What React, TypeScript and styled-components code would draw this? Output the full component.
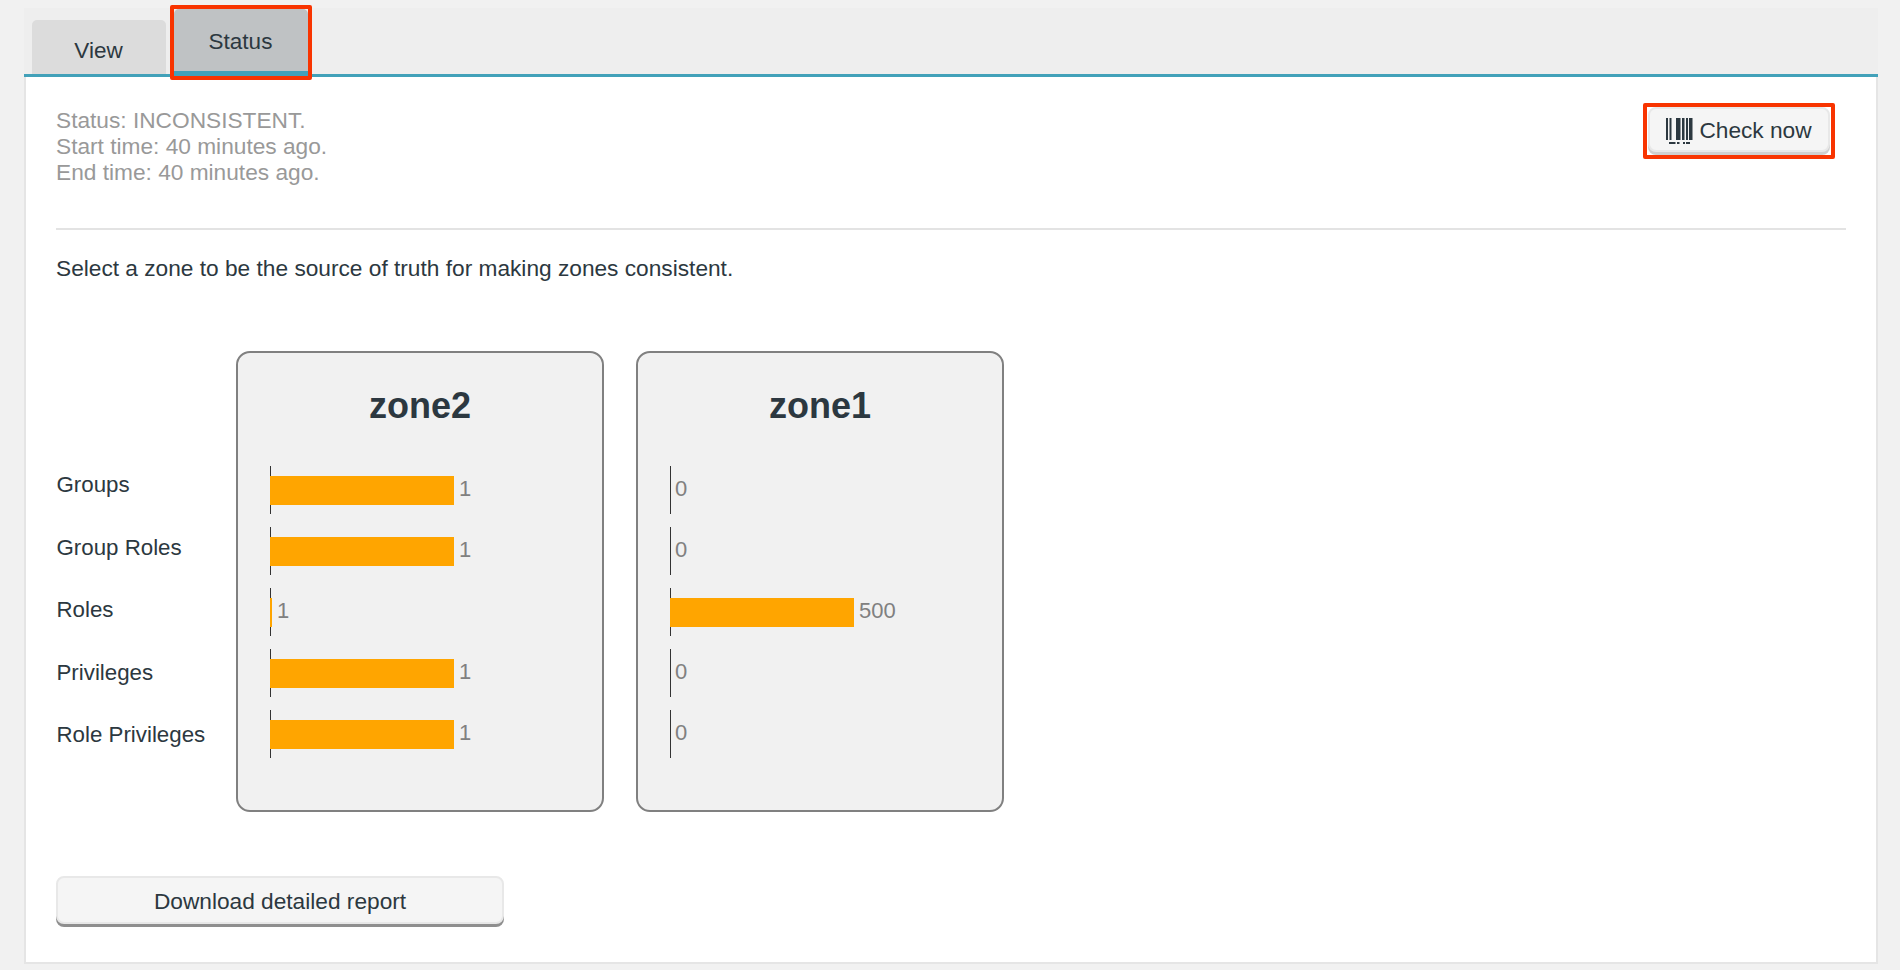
import React from "react";
import styled, { createGlobalStyle } from "styled-components";

const Global = createGlobalStyle`
  html, body { margin: 0; padding: 0; background: #f1f1f1; }
  body { font-family: "Liberation Sans", Arial, sans-serif; color: #2c3840; }
  * { box-sizing: border-box; }
`;

const Panel = styled.div`
  width: 1854px;
  margin: 8px 0 6px 24px;
`;

const TabBar = styled.div`
  height: 69px;
  display: flex;
  align-items: flex-end;
  gap: 8px;
  padding-left: 8px;
  background: #eeeeee;
  border-bottom: 3px solid #42a1b9;
`;

const Tab = styled.div<{ $active?: boolean }>`
  position: relative;
  width: 134px;
  height: ${(p) => (p.$active ? "67px" : "54px")};
  margin-bottom: ${(p) => (p.$active ? "-2px" : "0")};
  padding-top: ${(p) => (p.$active ? "20px" : "18px")};
  padding-right: 1px;
  text-align: center;
  font-size: 22.5px;
  line-height: 26px;
  border-radius: 5px 5px 0 0;
  background: ${(p) => (p.$active ? "#bfc2c4" : "#dcdcdc")};
  border-bottom: ${(p) => (p.$active ? "5px solid #42a1b9" : "none")};

  &::after {
    content: ${(p) => (p.$active ? '""' : "none")};
    position: absolute;
    inset: -4px -4px -9px;
    border: 4px solid #f83400;
    border-radius: 2px;
  }
`;

const Body = styled.div`
  height: 887px;
  padding: 31px 30px 0 30px;
  background: #ffffff;
  border: 2px solid #e5e5e5;
  border-top: none;
`;

const Head = styled.div`
  height: 122px;
  display: flex;
  justify-content: space-between;
  align-items: flex-start;
  border-bottom: 2px solid #e3e3e3;
`;

const StatusText = styled.div`
  margin-top: -1px;
  font-size: 22.7px;
  line-height: 26px;
  color: #999999;
`;

const Button = styled.button<{ $heavy?: boolean }>`
  position: relative;
  display: flex;
  align-items: center;
  justify-content: center;
  gap: 6px;
  padding: 2px 0 0;
  font-family: inherit;
  font-size: 22.7px;
  color: #2c3840;
  background: #f5f5f5;
  border: 2px solid #e8e8e8;
  border-radius: 8px;
  box-shadow: 0 3px 0 ${(p) => (p.$heavy ? "#8f8f8f" : "#cfcfcf")};
`;

const CheckButton = styled(Button)`
  width: 182px;
  height: 45px;
  margin-top: -1px;
  margin-right: 16px;

  &::after {
    content: "";
    position: absolute;
    inset: -6px -7px -9px;
    border: 4px solid #f83400;
    border-radius: 2px;
  }
`;

const Intro = styled.p`
  margin: 25px 0 0;
  font-size: 22.7px;
  line-height: 26px;
`;

const Compare = styled.div`
  display: flex;
  margin-top: 70px;
`;

const LabelColumn = styled.div`
  width: 180px;
  padding-top: 103px;
  display: grid;
  grid-auto-rows: 62.5px;
  align-content: start;
`;

const RowLabel = styled.div`
  padding-left: 0.5px;
  font-size: 22.3px;
  line-height: 62.5px;
  white-space: nowrap;
`;

const Card = styled.div`
  width: 368px;
  height: 461px;
  margin-right: 32px;
  padding: 0 0 0 32px;
  background: #f1f1f1;
  border: 2px solid #808080;
  border-radius: 14px;
`;

const Title = styled.h2`
  margin: 0 0 0 -32px;
  height: 113px;
  padding-top: 31px;
  text-align: center;
  font-size: 36px;
  line-height: 44px;
  font-weight: 700;
`;

const Chart = styled.div`
  display: grid;
  grid-auto-rows: 48px;
  row-gap: 13px;
`;

const ChartRow = styled.div`
  display: flex;
  align-items: center;
  border-left: 1px solid #333333;
`;

const Bar = styled.div<{ $w: number }>`
  width: ${(p) => p.$w}px;
  height: 29px;
  margin-left: -1px;
  background: #ffa500;
`;

const Value = styled.span<{ $zero?: boolean }>`
  margin: -2px 0 0 ${(p) => (p.$zero ? "4px" : "5px")};
  font-size: 22px;
  color: #808080;
`;

const DownloadButton = styled(Button)`
  width: 448px;
  height: 48px;
  margin-top: 64px;
  padding-top: 3px;
`;

const Barcode = () => (
  <svg width="27" height="26" viewBox="0 0 27 26" fill="#2c3840">
    <rect x="0" y="0" width="2" height="22" />
    <rect x="3.5" y="0" width="2" height="22" />
    <rect x="10" y="0" width="4.5" height="22" />
    <rect x="16" y="0" width="2.5" height="22" />
    <rect x="20" y="0" width="2" height="22" />
    <rect x="23" y="0" width="3.5" height="22" />
    <rect x="3" y="24" width="6.5" height="2" />
    <rect x="11" y="24" width="2.5" height="2" />
    <rect x="17" y="24" width="2" height="2" />
    <rect x="20" y="24" width="4" height="2" />
  </svg>
);

const labels = ["Groups", "Group Roles", "Roles", "Privileges", "Role Privileges"];
const zones = [
  { name: "zone2", values: [1, 1, 1, 1, 1], widths: [184, 184, 2, 184, 184] },
  { name: "zone1", values: [0, 0, 500, 0, 0], widths: [0, 0, 184, 0, 0] },
];

export default function App() {
  return (
    <>
      <Global />
      <Panel>
        <TabBar>
          <Tab>View</Tab>
          <Tab $active>Status</Tab>
        </TabBar>
        <Body>
          <Head>
            <StatusText>
              Status: INCONSISTENT.
              <br />
              Start time: 40 minutes ago.
              <br />
              End time: 40 minutes ago.
            </StatusText>
            <CheckButton>
              <Barcode />
              Check now
            </CheckButton>
          </Head>
          <Intro>Select a zone to be the source of truth for making zones consistent.</Intro>
          <Compare>
            <LabelColumn>
              {labels.map((l) => (
                <RowLabel key={l}>{l}</RowLabel>
              ))}
            </LabelColumn>
            {zones.map((z) => (
              <Card key={z.name}>
                <Title>{z.name}</Title>
                <Chart>
                  {z.values.map((v, i) => (
                    <ChartRow key={i}>
                      {z.widths[i] > 0 && <Bar $w={z.widths[i]} />}
                      <Value $zero={v === 0}>{v}</Value>
                    </ChartRow>
                  ))}
                </Chart>
              </Card>
            ))}
          </Compare>
          <DownloadButton $heavy>Download detailed report</DownloadButton>
        </Body>
      </Panel>
    </>
  );
}
